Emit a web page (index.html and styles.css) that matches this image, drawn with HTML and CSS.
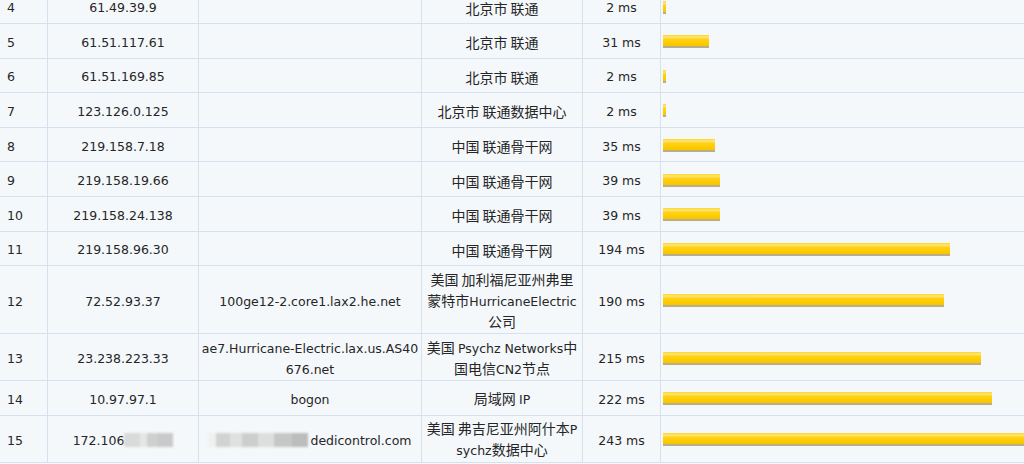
FILE: index.html
```html
<!DOCTYPE html>
<html lang="zh-CN">
<head>
<meta charset="utf-8">
<title>Traceroute</title>
<link rel="stylesheet" href="styles.css">
</head>
<body>
<div class="trace">
  <div class="row">
    <div class="cell hop">4</div>
    <div class="cell">61.49.39.9</div>
    <div class="cell host"></div>
    <div class="cell"><span class="zh">北京市 联通</span></div>
    <div class="cell">2 ms</div>
    <div class="cell graph"><span class="bar" style="width:3px"></span></div>
  </div>
  <div class="row">
    <div class="cell hop">5</div>
    <div class="cell">61.51.117.61</div>
    <div class="cell host"></div>
    <div class="cell"><span class="zh">北京市 联通</span></div>
    <div class="cell">31 ms</div>
    <div class="cell graph"><span class="bar" style="width:46px"></span></div>
  </div>
  <div class="row">
    <div class="cell hop">6</div>
    <div class="cell">61.51.169.85</div>
    <div class="cell host"></div>
    <div class="cell"><span class="zh">北京市 联通</span></div>
    <div class="cell">2 ms</div>
    <div class="cell graph"><span class="bar" style="width:3px"></span></div>
  </div>
  <div class="row">
    <div class="cell hop">7</div>
    <div class="cell">123.126.0.125</div>
    <div class="cell host"></div>
    <div class="cell"><span class="zh">北京市 联通数据中心</span></div>
    <div class="cell">2 ms</div>
    <div class="cell graph"><span class="bar" style="width:3px"></span></div>
  </div>
  <div class="row">
    <div class="cell hop">8</div>
    <div class="cell">219.158.7.18</div>
    <div class="cell host"></div>
    <div class="cell"><span class="zh">中国 联通骨干网</span></div>
    <div class="cell">35 ms</div>
    <div class="cell graph"><span class="bar" style="width:52px"></span></div>
  </div>
  <div class="row">
    <div class="cell hop">9</div>
    <div class="cell">219.158.19.66</div>
    <div class="cell host"></div>
    <div class="cell"><span class="zh">中国 联通骨干网</span></div>
    <div class="cell">39 ms</div>
    <div class="cell graph"><span class="bar" style="width:57px"></span></div>
  </div>
  <div class="row">
    <div class="cell hop">10</div>
    <div class="cell">219.158.24.138</div>
    <div class="cell host"></div>
    <div class="cell"><span class="zh">中国 联通骨干网</span></div>
    <div class="cell">39 ms</div>
    <div class="cell graph"><span class="bar" style="width:57px"></span></div>
  </div>
  <div class="row">
    <div class="cell hop">11</div>
    <div class="cell">219.158.96.30</div>
    <div class="cell host"></div>
    <div class="cell"><span class="zh">中国 联通骨干网</span></div>
    <div class="cell">194 ms</div>
    <div class="cell graph"><span class="bar" style="width:287px"></span></div>
  </div>
  <div class="row">
    <div class="cell hop">12</div>
    <div class="cell">72.52.93.37</div>
    <div class="cell host">100ge12-2.core1.lax2.he.net</div>
    <div class="cell"><span class="txt"><span class="zh">美国 加利福尼亚州弗里</span><br><span class="zh">蒙特市</span>HurricaneElectric<br><span class="zh">公司</span></span></div>
    <div class="cell">190 ms</div>
    <div class="cell graph"><span class="bar" style="width:281px"></span></div>
  </div>
  <div class="row">
    <div class="cell hop">13</div>
    <div class="cell">23.238.223.33</div>
    <div class="cell host"><span class="txt">ae7.Hurricane-Electric.lax.us.AS40<br>676.net</span></div>
    <div class="cell"><span class="txt"><span class="zh">美国 </span>Psychz Networks<span class="zh">中</span><br><span class="zh">国电信</span>CN2<span class="zh">节点</span></span></div>
    <div class="cell">215 ms</div>
    <div class="cell graph"><span class="bar" style="width:318px"></span></div>
  </div>
  <div class="row">
    <div class="cell hop">14</div>
    <div class="cell">10.97.97.1</div>
    <div class="cell host">bogon</div>
    <div class="cell"><span class="txt"><span class="zh">局域网 </span>IP</span></div>
    <div class="cell">222 ms</div>
    <div class="cell graph"><span class="bar" style="width:329px"></span></div>
  </div>
  <div class="row">
    <div class="cell hop">15</div>
    <div class="cell"><span class="txt">172.106<span class="mask mask-ip"></span></span></div>
    <div class="cell host"><span class="txt"><span class="mask mask-host"></span>dedicontrol.com</span></div>
    <div class="cell"><span class="txt"><span class="zh">美国 弗吉尼亚州阿什本</span>P<br>sychz<span class="zh">数据中心</span></span></div>
    <div class="cell">243 ms</div>
    <div class="cell graph"><span class="bar" style="width:361px"></span></div>
  </div>
</div>
</body>
</html>
```

FILE: styles.css
```css
html, body {
  margin: 0;
  padding: 0;
}

body {
  background: #f4f8fb;
  overflow: hidden;
  font-family: "DejaVu Sans", "Noto Sans CJK SC", sans-serif;
  font-size: 12.5px;
  color: #262626;
}

.trace {
  width: 1060px;
  margin-top: -10.6px;
  display: flex;
  flex-direction: column;
  gap: 1px;
  padding-bottom: 1px;
  background: #d5e1ef;
}

.row {
  display: grid;
  grid-template-columns: 47px 150px 222px 160px 77px 1fr;
  gap: 1px;
  min-height: 33.6px;
}

.cell {
  background: #f4f8fb;
  display: flex;
  align-items: center;
  justify-content: center;
  text-align: center;
  padding: 3.5px 3px 0.5px;
  line-height: 21px;
  white-space: nowrap;
  overflow: visible;
}

.hop {
  justify-content: flex-start;
  padding-left: 7px;
}

.graph {
  justify-content: flex-start;
  padding: 2px 0 2px 2px;
}

.txt {
  display: block;
}

.zh {
  font-family: "Noto Sans CJK SC", sans-serif;
  font-size: 14px;
  line-height: 1;
}

.bar {
  display: block;
  height: 11px;
  margin-top: 2px;
  background: linear-gradient(#ffd41c 0, #ffe67a 18%, #ffd21a 40%, #ffcc00 70%, #f8c400 100%);
  border-bottom: 2px solid #b9ae8a;
  box-sizing: content-box;
}

.mask {
  display: inline-block;
  height: 14px;
  vertical-align: -2px;
  filter: blur(1.3px);
}

.mask-ip {
  width: 49px;
  background: linear-gradient(90deg, #dadada 0 33%, #e6e6e6 33% 47%, #cfcfcf 47% 70%, #c9c9c9 70% 100%);
}

.mask-host {
  width: 100px;
  margin-right: 2px;
  background: linear-gradient(90deg, #f0f0f0 0 8%, #d2d2d2 8% 22%, #e0e0e0 22% 34%, #cdcdcd 34% 50%, #dedede 50% 66%, #c6c6c6 66% 84%, #bcbcbc 84% 100%);
}
```
